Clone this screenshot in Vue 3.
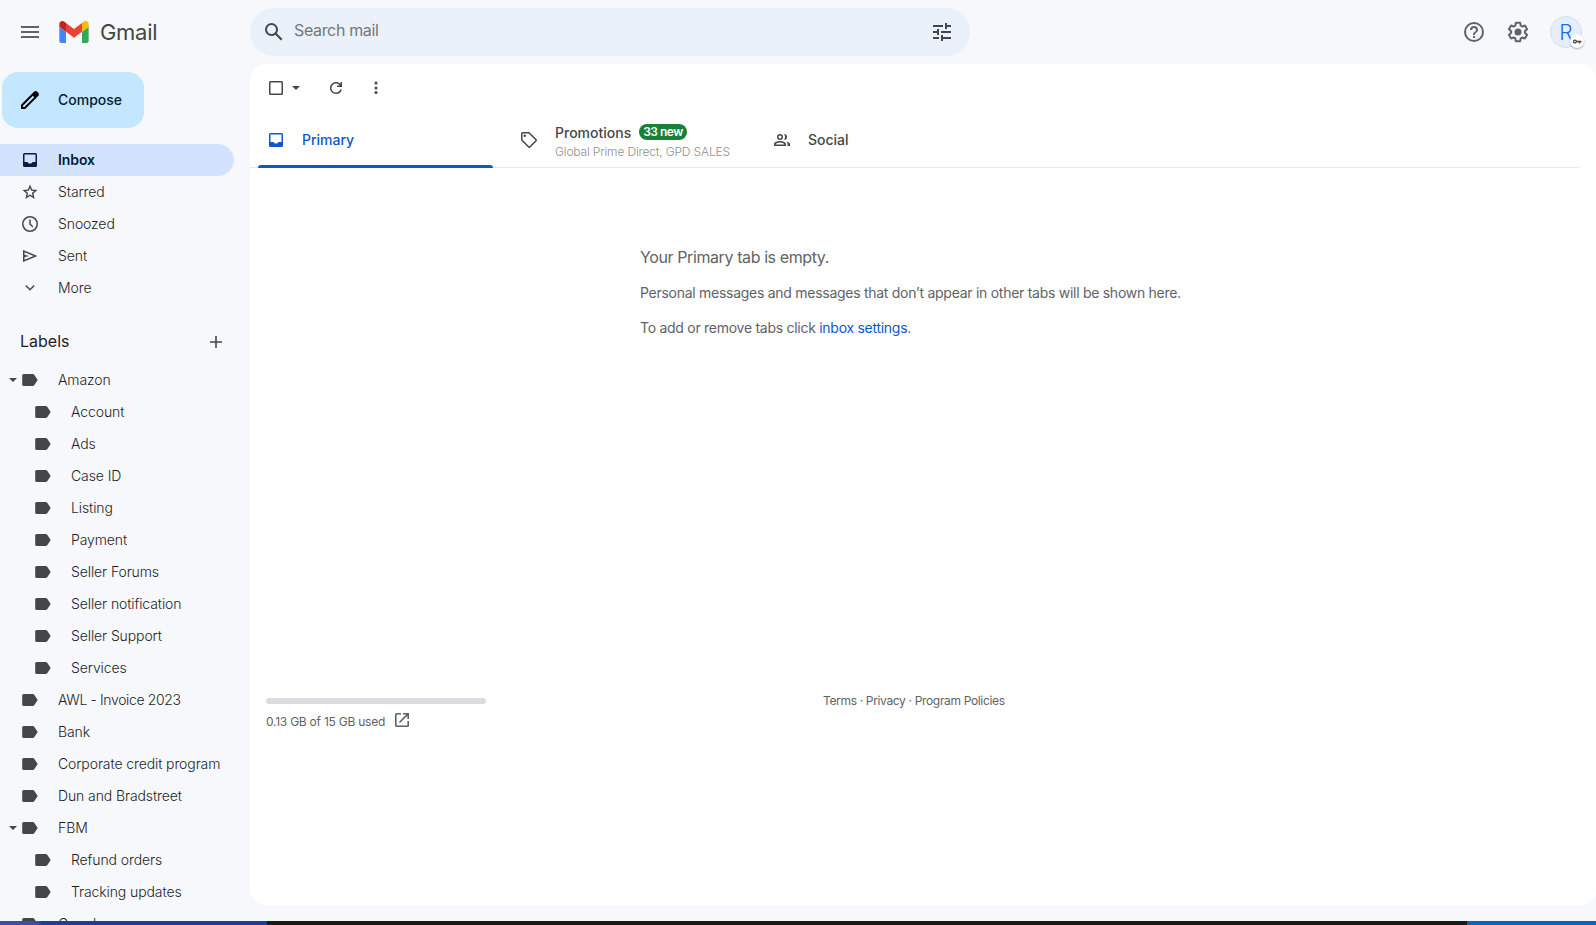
<script setup>
import { ref } from 'vue';

const search = ref('');
const activeTab = ref('primary');

const folders = [
  { name: 'Inbox', icon: 'inbox' },
  { name: 'Starred', icon: 'star' },
  { name: 'Snoozed', icon: 'clock' },
  { name: 'Sent', icon: 'send' },
  { name: 'More', icon: 'chevron' }
];

const labels = [
  { name: 'Amazon', open: true },
  { name: 'Account', child: true },
  { name: 'Ads', child: true },
  { name: 'Case ID', child: true },
  { name: 'Listing', child: true },
  { name: 'Payment', child: true },
  { name: 'Seller Forums', child: true },
  { name: 'Seller notification', child: true },
  { name: 'Seller Support', child: true },
  { name: 'Services', child: true },
  { name: 'AWL - Invoice 2023', tight: true },
  { name: 'Bank' },
  { name: 'Corporate credit program' },
  { name: 'Dun and Bradstreet' },
  { name: 'FBM', open: true },
  { name: 'Refund orders', child: true },
  { name: 'Tracking updates', child: true },
  { name: 'Google' }
];

const tabs = [
  { id: 'primary', name: 'Primary', icon: 'inbox' },
  { id: 'promotions', name: 'Promotions', icon: 'tag', badge: '33 new', senders: 'Global Prime Direct, GPD SALES' },
  { id: 'social', name: 'Social', icon: 'people' }
];

// all drawn on a 20x20 grid
const icons = {
  inbox: 'M4.500 3h11A1.500 1.500 0 0 1 17 4.500v11a1.500 1.500 0 0 1-1.500 1.500h-11A1.500 1.500 0 0 1 3 15.500v-11A1.500 1.500 0 0 1 4.500 3zM4.500 4.500v7.500h3c.5 1 1.400 1.600 2.500 1.600s2-.6 2.500-1.600h3V4.500z',
  star: 'm10 2.500 2.150 5.050 5.350.45-4.060 3.560L14.700 17 10 14.100 5.300 17l1.260-5.440L2.500 8l5.350-.45zm0 3.550L8.840 8.800l-3 .26 2.280 1.980-.7 2.960L10 12.450 12.580 14l-.7-2.960 2.280-1.980-3-.26z',
  clock: 'M10 2a8 8 0 1 0 0 16 8 8 0 0 0 0-16zm0 1.500a6.500 6.500 0 1 1 0 13 6.500 6.500 0 0 1 0-13zM9.250 5.500v4.850l3 3 1.060-1.060-2.560-2.560V5.500z',
  send: 'M3 4v12l14.500-6zm1.500 2.250L13.600 10l-9.100 3.750v-2.600L9 10 4.500 8.850z',
  chevron: 'm10 12.800-4.700-4.700 1.050-1.050L10 10.700l3.650-3.650L14.700 8.100z',
  tag: 'M3.500 2h6.200c.4 0 .8.150 1.060.44l6.800 6.800a1.500 1.500 0 0 1 0 2.120l-6.200 6.200a1.500 1.500 0 0 1-2.120 0l-6.800-6.800A1.500 1.500 0 0 1 2 9.700V3.500A1.500 1.500 0 0 1 3.500 2zm0 1.500v6.200l6.800 6.800 6.200-6.200-6.800-6.800zm2.250 1a1.250 1.250 0 1 1 0 2.500 1.250 1.250 0 0 1 0-2.500z',
  people: 'M8 4a3 3 0 1 1 0 6 3 3 0 0 1 0-6zm0 1.500a1.500 1.500 0 1 0 0 3 1.500 1.500 0 0 0 0-3zM2 16v-1.800C2 12 5.500 11 8 11s6 1 6 3.200V16zm1.500-1.500h9c0-1-2.300-2-4.500-2s-4.500 1-4.500 2zM12 10c.6-.8 1-1.800 1-3s-.4-2.200-1-3a3 3 0 1 1 0 6zm3.500 6v-2c0-1-.5-1.900-1.300-2.600 2 .5 3.800 1.400 3.800 2.800V16z'
};
</script>

<template>
  <div class="app">
    <header class="topbar">
      <div class="brand">
        <svg class="menu-icon" viewBox="0 0 24 24"><path d="M3 18h18v-2H3v2zm0-5h18v-2H3v2zm0-7v2h18V6H3z" /></svg>
        <svg class="logo" viewBox="52 42 88 66">
          <path fill="#4285f4" d="M58 108h14V74L52 59v43c0 3.320 2.690 6 6 6" />
          <path fill="#34a853" d="M120 108h14c3.320 0 6-2.690 6-6V59l-20 15" />
          <path fill="#fbbc04" d="M120 48v26l20-15v-8c0-7.420-8.470-11.650-14.400-7.200" />
          <path fill="#ea4335" d="M72 74V48l24 18 24-18v26L96 92" />
          <path fill="#c5221f" d="M52 51v8l20 15V48l-5.600-4.200c-5.940-4.450-14.400-.22-14.400 7.200" />
        </svg>
        <span class="brand-name">Gmail</span>
      </div>
      <div class="search">
        <svg class="search-icon" viewBox="0 0 24 24"><path d="M20.490 19l-5.730-5.730C15.530 12.200 16 10.910 16 9.500A6.500 6.500 0 1 0 9.500 16c1.410 0 2.700-.47 3.770-1.240L19 20.490 20.490 19zM5 9.500C5 7.010 7.010 5 9.500 5S14 7.010 14 9.500 11.990 14 9.500 14 5 11.990 5 9.500z" /></svg>
        <input v-model="search" type="text" placeholder="Search mail" />
        <svg class="tune-icon" viewBox="0 0 24 24"><path d="M3 17v2h6v-2H3zM3 5v2h10V5H3zm10 16v-2h8v-2h-8v-2h-2v6h2zM7 9v2H3v2h4v2h2V9H7zm14 4v-2H11v2h10zm-6-4h2V7h4V5h-4V3h-2v6z" /></svg>
      </div>
      <div class="account">
        <svg class="help-icon" viewBox="0 0 24 24"><path d="M12 2a10 10 0 1 0 0 20 10 10 0 0 0 0-20zm0 18a8 8 0 1 1 0-16 8 8 0 0 1 0 16zm-1-4h2v2h-2zm1-10a4 4 0 0 0-4 4h2a2 2 0 1 1 4 0c0 2-3 1.750-3 5h2c0-2.250 3-2.500 3-5a4 4 0 0 0-4-4z" /></svg>
        <svg class="gear-icon" viewBox="0 0 24 24">
          <path d="M13.850 22.250h-3.700c-.74 0-1.360-.54-1.450-1.270l-.27-1.890c-.27-.14-.53-.29-.79-.46l-1.800.72c-.7.260-1.470-.03-1.810-.65L2.200 15.530c-.35-.66-.2-1.440.36-1.880l1.530-1.190c-.01-.15-.02-.3-.02-.46 0-.15.010-.31.020-.46l-1.520-1.190c-.59-.45-.74-1.260-.37-1.880l1.850-3.190c.34-.62 1.110-.9 1.790-.63l1.810.73c.26-.17.52-.32.78-.46l.27-1.910c.09-.7.710-1.250 1.440-1.250h3.700c.74 0 1.360.54 1.450 1.270l.27 1.890c.27.140.530.290.790.460l1.800-.72c.71-.26 1.480.03 1.820.65l1.840 3.180c.36.660.2 1.440-.36 1.880l-1.520 1.190c.1.150.2.300.2.460s-.1.310-.2.460l1.520 1.190c.56.450.720 1.230.37 1.860l-1.860 3.220c-.34.620-1.110.9-1.800.63l-1.800-.72c-.26.170-.52.320-.78.460l-.27 1.910c-.1.680-.72 1.220-1.460 1.220zm-3.230-2h2.760l.37-2.550.53-.22c.44-.18.880-.44 1.340-.78l.45-.34 2.380.96 1.380-2.400-2.030-1.580.07-.56c.03-.26.060-.51.060-.78s-.03-.53-.06-.78l-.07-.56 2.030-1.580-1.390-2.400-2.390.96-.45-.35c-.42-.32-.87-.58-1.330-.77l-.52-.22-.37-2.550h-2.760l-.37 2.550-.53.210c-.44.190-.88.440-1.340.79l-.45.330-2.380-.95-1.390 2.390 2.030 1.580-.07.560a7 7 0 0 0-.06.790c0 .26.020.53.060.78l.07.560-2.030 1.580 1.380 2.400 2.390-.96.450.350c.43.330.86.580 1.330.77l.53.220z" />
          <circle cx="12" cy="12" r="3.500" />
        </svg>
        <div class="avatar">
          R
          <span class="key-badge">
            <svg viewBox="0 0 12 8"><path d="M3.500 1.500a2.500 2.500 0 1 0 2.350 3.300H8V6.500h2V4.800h1.300V3.200H5.850A2.500 2.500 0 0 0 3.500 1.500zm0 1.500a1 1 0 1 1 0 2 1 1 0 0 1 0-2z" /></svg>
          </span>
        </div>
      </div>
    </header>

    <div class="body">
      <aside class="sidebar">
        <button class="compose">
          <svg viewBox="0 0 24 24"><path d="M20.410 4.940l-1.350-1.350c-.78-.78-2.050-.78-2.830 0L3 16.820V21h4.180L20.410 7.770c.79-.78.790-2.050 0-2.830zM6.410 19.060L5 19v-1.360l9.820-9.820 1.410 1.410-9.820 9.830z" /></svg>
          <span>Compose</span>
        </button>
        <nav>
          <a v-for="folder in folders" :key="folder.name" class="row folder" :class="{ active: folder.name === 'Inbox' }">
            <svg class="icon" viewBox="0 0 20 20"><path fill-rule="evenodd" :d="icons[folder.icon]" /></svg>
            <span>{{ folder.name }}</span>
          </a>
        </nav>
        <div class="labels-head">
          <span>Labels</span>
          <svg viewBox="0 0 20 20"><path d="M9.200 4h1.600v5.200H16v1.600h-5.200V16H9.200v-5.200H4V9.200h5.200z" /></svg>
        </div>
        <nav>
          <a v-for="label in labels" :key="label.name" class="row" :class="{ child: label.child, tight: label.tight }">
            <svg v-if="label.open" class="caret" viewBox="0 0 8 4"><path d="M0 0h8L4 4z" /></svg>
            <svg class="icon" viewBox="0 0 20 20"><path d="M3.700 4h9.200c.5 0 1 .25 1.300.66L17.700 10l-3.500 5.340c-.3.410-.8.660-1.300.66H3.700A1.500 1.500 0 0 1 2.200 14.500v-9A1.500 1.500 0 0 1 3.700 4z" /></svg>
            <span>{{ label.name }}</span>
          </a>
        </nav>
      </aside>

      <main class="panel">
        <div class="toolbar">
          <svg class="checkbox" viewBox="0 0 20 20"><path fill-rule="evenodd" d="M4.500 3h11A1.500 1.500 0 0 1 17 4.500v11a1.500 1.500 0 0 1-1.500 1.500h-11A1.500 1.500 0 0 1 3 15.500v-11A1.500 1.500 0 0 1 4.500 3zm0 1.500v11h11v-11z" /></svg>
          <svg class="caret" viewBox="0 0 8 4"><path d="M0 0h8L4 4z" /></svg>
          <svg class="refresh" viewBox="0 0 20 20"><path d="M10 16a6 6 0 1 1 4.500-9.950V4H16v5h-5V7.500h2.700A4.500 4.500 0 1 0 14.240 11.500h1.570A6 6 0 0 1 10 16z" /></svg>
          <svg class="dots" viewBox="0 0 20 20"><circle cx="10" cy="5" r="1.500" /><circle cx="10" cy="10" r="1.500" /><circle cx="10" cy="14.500" r="1.500" /></svg>
        </div>

        <div class="tabs">
          <div v-for="tab in tabs" :key="tab.id" class="tab" :class="{ active: tab.id === activeTab }" @click="activeTab = tab.id">
            <svg class="icon" viewBox="0 0 20 20"><path fill-rule="evenodd" :d="icons[tab.icon]" /></svg>
            <div class="tab-text">
              <div class="tab-title">
                <span>{{ tab.name }}</span>
                <span v-if="tab.badge" class="tab-badge">{{ tab.badge }}</span>
              </div>
              <div v-if="tab.senders" class="tab-senders">{{ tab.senders }}</div>
            </div>
          </div>
        </div>

        <section class="empty">
          <p class="empty-title">Your Primary tab is empty.</p>
          <p class="empty-message">Personal messages and messages that don’t appear in other tabs will be shown here.</p>
          <p class="empty-message">To add or remove tabs click <a>inbox settings</a>.</p>
        </section>

        <footer class="footer">
          <div class="storage">
            <div class="storage-bar"></div>
            <div class="storage-text">
              <span>0.13 GB of 15 GB used</span>
              <svg viewBox="0 0 14 14"><path d="M1.500 0H6v1.600H1.600v10.800h10.800V8H14v4.500a1.500 1.500 0 0 1-1.500 1.500h-11A1.500 1.500 0 0 1 0 12.500v-11A1.500 1.500 0 0 1 1.500 0zM8 0h6v6h-1.600V2.700L5 10.100 3.900 9l7.400-7.400H8z" /></svg>
            </div>
          </div>
          <div class="policies">Terms · Privacy · Program Policies</div>
        </footer>
      </main>
    </div>

    <div class="taskbar">
      <span class="task-search"></span>
      <span class="task-apps"></span>
      <span class="task-tray"></span>
    </div>
  </div>
</template>

<style>
body {
  background: #f6f8fc;
  overflow: hidden;
}
</style>

<style scoped>
.app {
  display: flex;
  flex-direction: column;
  width: 1596px;
  height: 925px;
  overflow: hidden;
  background: #f6f8fc;
  color: #444746;
  font-family: Inter, Roboto, sans-serif;
  font-size: 14px;
}

svg {
  display: block;
  flex: none;
  fill: currentColor;
}

.topbar {
  display: flex;
  align-items: center;
  flex: none;
  height: 64px;
}

.brand {
  display: flex;
  align-items: center;
  box-sizing: border-box;
  width: 250px;
  padding-left: 18px;
}

.menu-icon {
  width: 24px;
  height: 24px;
  color: #5f6368;
}

.logo {
  width: 30px;
  height: 22px;
  margin-left: 17px;
}

.brand-name {
  margin-left: 11px;
  font-size: 22px;
  letter-spacing: -0.3px;
}

.search {
  display: flex;
  align-items: center;
  box-sizing: border-box;
  width: 720px;
  height: 48px;
  padding: 0 16px 0 12px;
  border-radius: 24px;
  background: #eaf1fb;
}

.search-icon,
.tune-icon {
  width: 24px;
  height: 24px;
}

.search input {
  flex: 1;
  min-width: 0;
  margin: 0;
  padding: 0 0 4px 8px;
  border: 0;
  outline: 0;
  background: none;
  font-family: inherit;
  font-size: 16px;
  letter-spacing: -0.35px;
}

.search input::placeholder {
  color: #747775;
}

.account {
  display: flex;
  align-items: center;
  margin-left: auto;
  padding-right: 14px;
  color: #5f6368;
}

.help-icon,
.gear-icon {
  width: 24px;
  height: 24px;
  margin-right: 20px;
}

.avatar {
  position: relative;
  box-sizing: border-box;
  width: 32px;
  height: 32px;
  border: 1px solid #d3dff3;
  border-radius: 50%;
  background: #e6eefc;
  color: #1a6bf0;
  font-size: 21px;
  font-weight: 300;
  line-height: 31px;
  text-align: center;
}

.key-badge {
  position: absolute;
  right: -3px;
  bottom: -1px;
  display: flex;
  align-items: center;
  justify-content: center;
  width: 14px;
  height: 14px;
  border-radius: 50%;
  background: #fff;
  color: #444746;
  box-shadow: 0 1px 2px rgba(0, 0, 0, 0.3);
}

.key-badge svg {
  width: 10px;
  height: 7px;
}

.body {
  display: flex;
  flex: 1;
  min-height: 0;
}

.sidebar {
  width: 250px;
  overflow: hidden;
}

.compose {
  display: flex;
  align-items: center;
  gap: 16px;
  width: 142px;
  height: 56px;
  margin: 8px 0 16px 2px;
  padding: 0 0 0 16px;
  border: 0;
  border-radius: 16px;
  background: #c2e7ff;
  color: #001d35;
  font-family: inherit;
  font-size: 14px;
  font-weight: 450;
}

.compose span {
  padding-bottom: 2px;
}

.compose svg {
  width: 24px;
  height: 24px;
  color: #000;
}

.row {
  display: flex;
  align-items: center;
  position: relative;
  box-sizing: border-box;
  width: 234px;
  height: 32px;
  padding-left: 20px;
  border-radius: 0 16px 16px 0;
  white-space: nowrap;
  color: #1f1f1f;
  font-weight: 300;
  letter-spacing: -0.1px;
}

.row span {
  padding-bottom: 2px;
}

.row.child {
  padding-left: 33px;
}

.row.tight {
  letter-spacing: -0.37px;
}

.row .icon {
  width: 20px;
  height: 20px;
  margin-right: 18px;
  color: #444746;
}

.row.active {
  background: #d3e3fd;
  color: #001d35;
  font-weight: 600;
}

.row.active .icon {
  color: #041e49;
}

.caret {
  width: 8px;
  height: 4px;
  color: #444746;
}

.row .caret {
  position: absolute;
  left: 9px;
}

.labels-head {
  display: flex;
  align-items: center;
  justify-content: space-between;
  height: 40px;
  margin: 18px 24px 2px 20px;
  color: #1f1f1f;
  font-size: 16px;
}

.labels-head span {
  padding-bottom: 2px;
}

.labels-head svg {
  width: 20px;
  height: 20px;
  color: #444746;
}

.panel {
  display: flex;
  flex-direction: column;
  flex: 1;
  height: 841px;
  border-radius: 16px;
  background: #fff;
}

.toolbar {
  display: flex;
  align-items: center;
  height: 48px;
  padding-left: 16px;
}

.toolbar svg:not(.caret) {
  width: 20px;
  height: 20px;
}

.toolbar .caret {
  margin-left: 6px;
}

.refresh {
  margin-left: 26px;
}

.dots {
  margin-left: 20px;
}

.tabs {
  display: flex;
  box-sizing: border-box;
  height: 56px;
  margin-right: 16px;
  box-shadow: inset 0 -1px #e8eaed;
}

.tab {
  display: flex;
  align-items: center;
  position: relative;
  box-sizing: border-box;
  width: 253px;
  padding-left: 16px;
  font-weight: 450;
}

.tab .icon {
  width: 20px;
  height: 20px;
}

.tab-text {
  margin-left: 16px;
  white-space: nowrap;
}

.tab-title {
  display: flex;
  align-items: center;
  height: 16px;
  padding-bottom: 1px;
}

.tab-badge {
  height: 16px;
  margin-left: 8px;
  padding: 0 4px;
  border-radius: 8px;
  background: #188038;
  color: #fff;
  font-size: 12px;
  font-weight: 600;
  letter-spacing: -0.5px;
  line-height: 16px;
}

.tab-senders {
  height: 16px;
  margin: 3px 0 -4px;
  color: #8f9291;
  font-size: 12px;
  font-weight: 300;
  letter-spacing: -0.16px;
  line-height: 16px;
}

.tab.active {
  color: #0b57d0;
}

.tab.active::after {
  content: '';
  position: absolute;
  right: 10px;
  bottom: 0;
  left: 8px;
  height: 3px;
  border-radius: 3px 3px 0 0;
  background: #0b57d0;
}

.empty {
  margin: 79px 0 0 390px;
  color: #5f6368;
}

.empty p {
  margin: 0;
  white-space: nowrap;
}

.empty .empty-title {
  font-size: 16px;
  line-height: 20px;
  letter-spacing: -0.4px;
}

.empty .empty-message {
  margin-top: 15px;
  line-height: 20px;
  letter-spacing: -0.275px;
}

.empty .empty-title + .empty-message {
  margin-top: 16px;
}

.empty a {
  color: #0b57d0;
}

.footer {
  display: flex;
  margin: auto 0 174px 16px;
  color: #5f6368;
  font-size: 12px;
}

.storage {
  width: 557px;
}

.storage-bar {
  width: 220px;
  height: 6px;
  margin-top: 5px;
  border-radius: 3px;
  background: #dadce0;
}

.storage-text {
  display: flex;
  align-items: center;
  height: 20px;
  margin-top: 7px;
  letter-spacing: -0.24px;
}

.storage-text svg {
  width: 14px;
  height: 14px;
  margin: 0 0 3px 10px;
}

.policies {
  line-height: 16px;
  white-space: nowrap;
  letter-spacing: -0.34px;
}

.taskbar {
  display: flex;
  flex: none;
  height: 4px;
}

.task-search {
  width: 267px;
  background: linear-gradient(90deg, #3b519c 0, #3b519c 38px, #1d3f91 42px);
}

.task-apps {
  width: 1200px;
  background: #1a1a19;
}

.task-tray {
  flex: 1;
  background: #0563c1;
}
</style>
